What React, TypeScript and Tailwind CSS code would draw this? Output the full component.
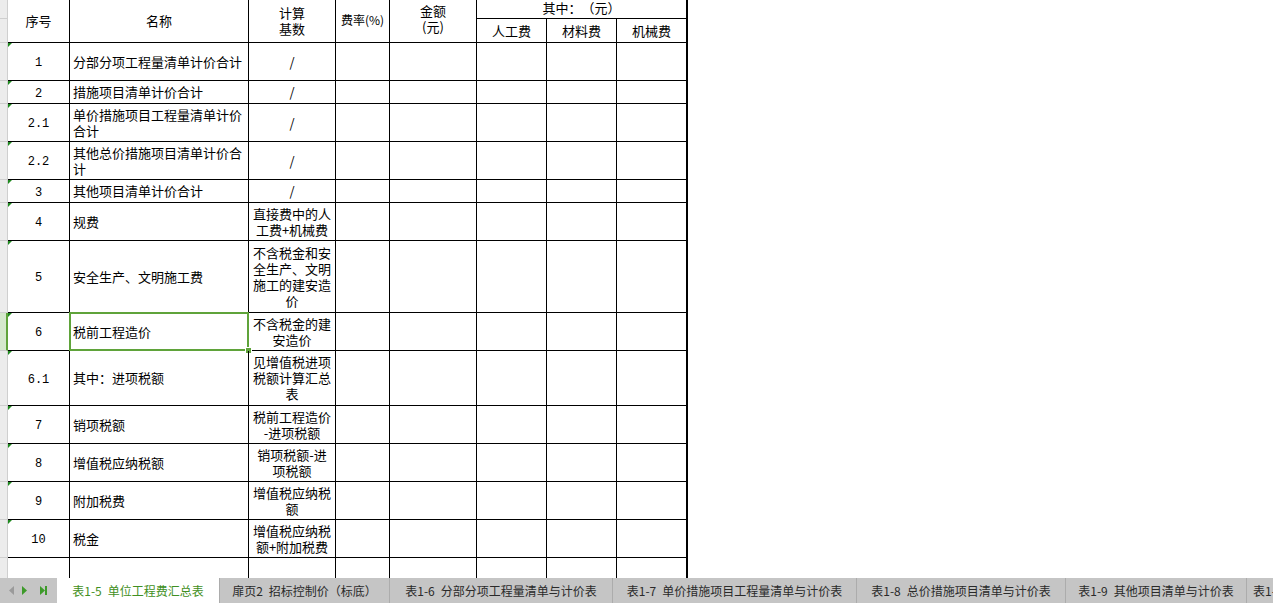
import React from 'react';

type Row = {
  n: string;
  name: string[];
  basis: string[];
  h: number;
  sel?: boolean;
};

const rows: Row[] = [
  { n: '1', name: ['分部分项工程量清单计价合计'], basis: ['/'], h: 38 },
  { n: '2', name: ['措施项目清单计价合计'], basis: ['/'], h: 23 },
  { n: '2.1', name: ['单价措施项目工程量清单计价', '合计'], basis: ['/'], h: 38 },
  { n: '2.2', name: ['其他总价措施项目清单计价合', '计'], basis: ['/'], h: 38 },
  { n: '3', name: ['其他项目清单计价合计'], basis: ['/'], h: 23 },
  { n: '4', name: ['规费'], basis: ['直接费中的人', '工费+机械费'], h: 38 },
  { n: '5', name: ['安全生产、文明施工费'], basis: ['不含税金和安', '全生产、文明', '施工的建安造', '价'], h: 72 },
  { n: '6', name: ['税前工程造价'], basis: ['不含税金的建', '安造价'], h: 38, sel: true },
  { n: '6.1', name: ['其中：进项税额'], basis: ['见增值税进项', '税额计算汇总', '表'], h: 55 },
  { n: '7', name: ['销项税额'], basis: ['税前工程造价', '-进项税额'], h: 38 },
  { n: '8', name: ['增值税应纳税额'], basis: ['销项税额-进', '项税额'], h: 38 },
  { n: '9', name: ['附加税费'], basis: ['增值税应纳税', '额'], h: 38 },
  { n: '10', name: ['税金'], basis: ['增值税应纳税', '额+附加税费'], h: 38 },
];

// widths follow the sheet tab strip of the reference
const tabs = [
  { label: '表1-5\u2002单位工程费汇总表', w: 163, active: true },
  { label: '扉页2\u2002招标控制价（标底）', w: 170 },
  { label: '表1-6\u2002分部分项工程量清单与计价表', w: 223 },
  { label: '表1-7\u2002单价措施项目工程量清单与计价表', w: 244 },
  { label: '表1-8\u2002总价措施项目清单与计价表', w: 209 },
  { label: '表1-9\u2002其他项目清单与计价表', w: 181 },
  { label: '表1-10\u2002税金项目计价表', w: 160, last: true },
];

const rh = 'border-b border-r border-[#cfcfcf] bg-[#ececec]';
const cell = 'border-b border-r border-black';

function Lines({ items }: { items: string[] }) {
  return (
    <>
      {items.map((t, i) => (
        <div key={i}>{t}</div>
      ))}
    </>
  );
}

export default function App() {
  const rowTemplate = ['19px', '24px', ...rows.map((r) => `${r.h}px`), '40px'].join(' ');

  return (
    <div className="h-[603px] w-[1273px] overflow-hidden bg-white flex flex-col font-['Noto_Sans_CJK_SC',sans-serif] text-black [text-spacing-trim:space-all]">
      {/* sheet */}
      <div className="h-[578px] overflow-hidden">
        <div
          className="grid text-[13px] leading-[16px]"
          style={{
            gridTemplateColumns: '8px 62px 179px 87px 54px 87px 70px 70px 71px',
            gridTemplateRows: rowTemplate,
          }}
        >
          {/* header */}
          <div className={rh} />
          <div className={`${cell} row-span-2 flex items-center justify-center`}>序号</div>
          <div className={`${cell} row-span-2 flex items-center justify-center`}>名称</div>
          <div className={`${cell} row-span-2 flex flex-col items-center justify-center`}>
            <div>计算</div>
            <div>基数</div>
          </div>
          <div className={`${cell} row-span-2 flex items-center justify-center pb-[3px] text-[12px]`}>费率(%)</div>
          <div className={`${cell} row-span-2 flex flex-col items-center justify-center pb-[4px]`}>
            <div>金额</div>
            <div>(元)</div>
          </div>
          <div className={`${cell} col-span-3 border-r-2 flex items-center justify-center pb-[2px]`}>其中：（元）</div>
          <div className={rh} />
          <div className={`${cell} flex items-center justify-center`}>人工费</div>
          <div className={`${cell} flex items-center justify-center`}>材料费</div>
          <div className={`${cell} border-r-2 flex items-center justify-center`}>机械费</div>

          {rows.map((r) => (
            <React.Fragment key={r.n}>
              <div className={r.sel ? 'border-b border-[#cfcfcf] border-r-2 border-r-[#5fa33a] bg-[#d5e8cc]' : rh} />
              <div className={`${cell} relative flex items-center justify-center pt-[3px] font-['Liberation_Mono',monospace] text-[12px]`}>
                <span className="absolute left-0 top-0 h-0 w-0 border-l-[4px] border-b-[4px] border-l-[#1f8a1f] border-b-transparent" />
                {r.n}
              </div>
              <div className={`${cell} relative flex flex-col justify-center pl-[3px]`}>
                <Lines items={r.name} />
                {r.sel && (
                  <>
                    <span className="absolute -left-px -top-px -right-px -bottom-px border-2 border-[#5fa33a]" />
                    <span className="absolute -right-[3px] -bottom-[3px] h-[5px] w-[5px] bg-[#5fa33a] outline outline-1 outline-white" />
                  </>
                )}
              </div>
              <div className={`${cell} flex flex-col items-center justify-center text-center`}>
                <Lines items={r.basis} />
              </div>
              <div className={cell} />
              <div className={cell} />
              <div className={cell} />
              <div className={cell} />
              <div className={`${cell} border-r-2`} />
            </React.Fragment>
          ))}

          {/* partial last row */}
          <div className={rh} />
          <div className={cell} />
          <div className={cell} />
          <div className={cell} />
          <div className={cell} />
          <div className={cell} />
          <div className={cell} />
          <div className={cell} />
          <div className={`${cell} border-r-2`} />
        </div>
      </div>

      {/* sheet tabs */}
      <div className="h-[25px] flex bg-[#c5c5c5] text-[12px] text-[#2a2a2a] whitespace-nowrap">
        <div className="w-[57px] shrink-0 flex items-center">
          <svg width="57" height="25" viewBox="0 0 57 25">
            <path d="M14 8 L9 12.5 L14 17 Z" fill="#9a9a9a" />
            <path d="M22 8 L27 12.5 L22 17 Z" fill="#3d9a2a" />
            <path d="M40 8 L45 12.5 L40 17 Z" fill="#3d9a2a" />
            <rect x="45" y="8" width="2" height="9" fill="#3d9a2a" />
          </svg>
        </div>
        {tabs.map((t) => (
          <div
            key={t.label}
            style={{ width: t.w }}
            className={`shrink-0 flex items-center border-r border-[#acacac] ${
              t.last ? 'justify-start pl-[6px]' : 'justify-center'
            } ${t.active ? 'bg-white text-[#3f8f22]' : ''}`}
          >
            {t.label}
          </div>
        ))}
      </div>
    </div>
  );
}
